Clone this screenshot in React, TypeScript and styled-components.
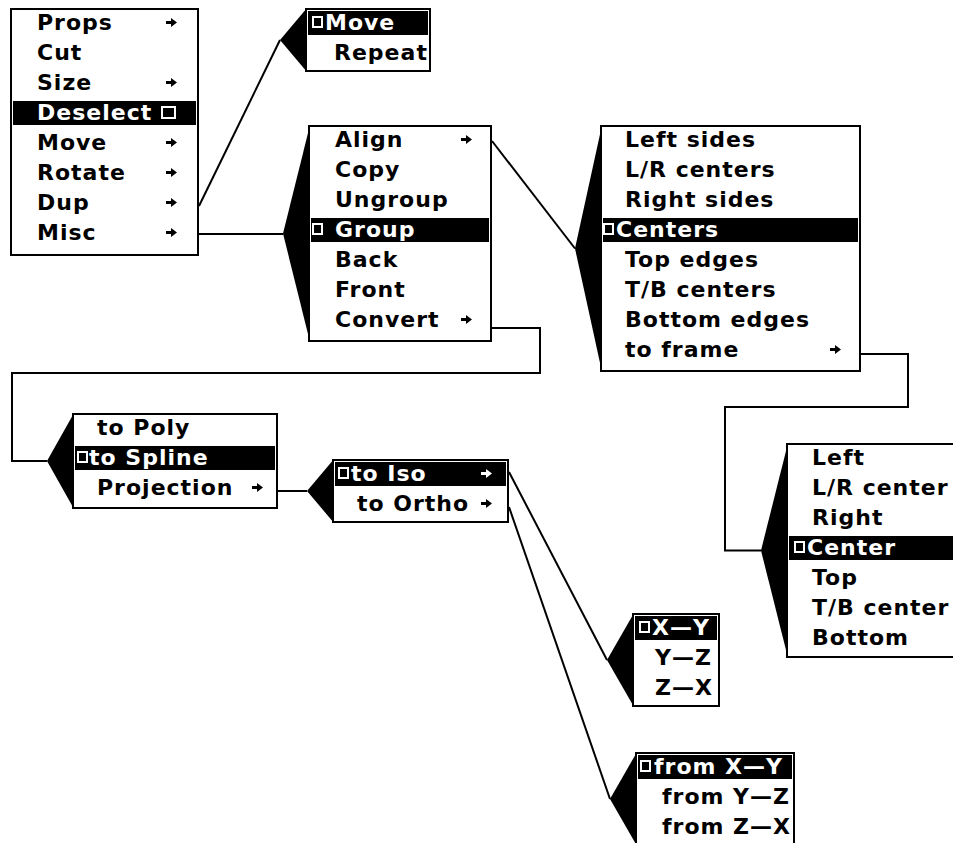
import React from "react";
import styled, { createGlobalStyle } from "styled-components";

const Global = createGlobalStyle`
  html, body { margin: 0; padding: 0; background: #fff; }
  body { overflow: hidden; }
`;

const Canvas = styled.div`
  position: relative;
  width: 953px;
  height: 843px;
  overflow: hidden;
  background: #fff;
  color: #000;
  font-family: "DejaVu Sans", "Liberation Sans", sans-serif;
  font-weight: 700;
  font-size: 22px;
  letter-spacing: 1px;
`;

const Wires = styled.svg`
  position: absolute;
  left: 0;
  top: 0;
  width: 953px;
  height: 843px;
`;

const Box = styled.div<{ $x: number; $y: number; $w: number; $pb: number }>`
  position: absolute;
  left: ${(p) => p.$x}px;
  top: ${(p) => p.$y}px;
  width: ${(p) => p.$w}px;
  box-sizing: border-box;
  display: flex;
  flex-direction: column;
  border: 2px solid #000;
  background: #fff;
  padding: 0 0 ${(p) => p.$pb}px;
`;

const Pointer = styled.svg`
  position: absolute;
  right: 100%;
  top: -2px;
  width: 27px;
  height: calc(100% + 4px);
  overflow: visible;
`;

const Row = styled.div<{ $hl?: boolean; $pl: number; $pr: number }>`
  flex: none;
  display: flex;
  align-items: flex-start;
  height: 24px;
  margin: 1px 1px 5px;
  box-sizing: border-box;
  padding: 2px ${(p) => p.$pr}px 0 ${(p) => p.$pl}px;
  line-height: 20px;
  white-space: nowrap;
  background: ${(p) => (p.$hl ? "#000" : "transparent")};
  color: ${(p) => (p.$hl ? "#fff" : "#000")};
`;

const Label = styled.span<{ $ml?: number }>`
  flex: 1 1 auto;
  margin-left: ${(p) => p.$ml ?? 0}px;
`;

const Check = styled.span<{ $big?: boolean; $after?: boolean }>`
  flex: none;
  box-sizing: border-box;
  width: ${(p) => (p.$big ? 15 : 11)}px;
  height: ${(p) => (p.$big ? 13 : 12)}px;
  margin-top: 3px;
  margin-left: ${(p) => (p.$after ? 9 : 0)}px;
  border: 2px solid currentColor;
`;

const ArrowIcon = styled.svg`
  flex: none;
  width: 11px;
  height: 9px;
  margin-top: 5px;
`;

type Item = { t: string; hl?: boolean; arrow?: boolean; after?: boolean };
type MenuDef = {
  x: number;
  y: number;
  w: number;
  pb: number;
  textPad: number;
  hlPad: number;
  hlText: number;
  pr: number;
  pointer?: boolean;
  items: Item[];
};

const Arrow = () => (
  <ArrowIcon viewBox="0 0 11 9">
    <rect x="0" y="3" width="6" height="3" fill="currentColor" />
    <polygon points="5,0 11,4.5 5,9" fill="currentColor" />
  </ArrowIcon>
);

const Menu = ({ m }: { m: MenuDef }) => (
  <Box $x={m.x} $y={m.y} $w={m.w} $pb={m.pb}>
    {m.pointer && (
      <Pointer viewBox="0 0 27 100" preserveAspectRatio="none">
        <polygon points="27,0 0,50 27,100" fill="#000" />
      </Pointer>
    )}
    {m.items.map((it) => {
      if (it.hl && !it.after) {
        return (
          <Row key={it.t} $hl $pl={m.hlPad - 3} $pr={m.pr}>
            <Check />
            <Label $ml={m.hlText - m.hlPad - 11}>{it.t}</Label>
            {it.arrow && <Arrow />}
          </Row>
        );
      }
      return (
        <Row key={it.t} $hl={it.hl} $pl={m.textPad - 3} $pr={m.pr}>
          {it.after ? (
            <>
              <span>{it.t}</span>
              <Check $big $after />
            </>
          ) : (
            <Label>{it.t}</Label>
          )}
          {it.arrow && <Arrow />}
        </Row>
      );
    })}
  </Box>
);

const menus: MenuDef[] = [
  {
    x: 10, y: 8, w: 189, pb: 4, textPad: 27, hlPad: 4, hlText: 27, pr: 19,
    items: [
      { t: "Props", arrow: true },
      { t: "Cut" },
      { t: "Size", arrow: true },
      { t: "Deselect", hl: true, after: true },
      { t: "Move", arrow: true },
      { t: "Rotate", arrow: true },
      { t: "Dup", arrow: true },
      { t: "Misc", arrow: true },
    ],
  },
  {
    x: 305, y: 8, w: 126, pb: 0, textPad: 29, hlPad: 7, hlText: 20, pr: 4, pointer: true,
    items: [{ t: "Move", hl: true }, { t: "Repeat" }],
  },
  {
    x: 308, y: 125, w: 184, pb: 3, textPad: 27, hlPad: 4, hlText: 27, pr: 17, pointer: true,
    items: [
      { t: "Align", arrow: true },
      { t: "Copy" },
      { t: "Ungroup" },
      { t: "Group", hl: true },
      { t: "Back" },
      { t: "Front" },
      { t: "Convert", arrow: true },
    ],
  },
  {
    x: 600, y: 125, w: 261, pb: 3, textPad: 25, hlPad: 3, hlText: 16, pr: 17, pointer: true,
    items: [
      { t: "Left sides" },
      { t: "L/R centers" },
      { t: "Right sides" },
      { t: "Centers", hl: true },
      { t: "Top edges" },
      { t: "T/B centers" },
      { t: "Bottom edges" },
      { t: "to frame", arrow: true },
    ],
  },
  {
    x: 72, y: 413, w: 206, pb: 2, textPad: 25, hlPad: 5, hlText: 17, pr: 12, pointer: true,
    items: [{ t: "to Poly" }, { t: "to Spline", hl: true }, { t: "Projection", arrow: true }],
  },
  {
    x: 332, y: 459, w: 177, pb: 0, textPad: 25, hlPad: 6, hlText: 19, pr: 14, pointer: true,
    items: [
      { t: "to Iso", hl: true, arrow: true },
      { t: "to Ortho", arrow: true },
    ],
  },
  {
    x: 632, y: 613, w: 88, pb: 0, textPad: 23, hlPad: 7, hlText: 20, pr: 4, pointer: true,
    items: [{ t: "X—Y", hl: true }, { t: "Y—Z" }, { t: "Z—X" }],
  },
  {
    x: 635, y: 752, w: 160, pb: 0, textPad: 27, hlPad: 5, hlText: 19, pr: 4, pointer: true,
    items: [{ t: "from X—Y", hl: true }, { t: "from Y—Z" }, { t: "from Z—X" }],
  },
  {
    x: 786, y: 443, w: 200, pb: 1, textPad: 26, hlPad: 8, hlText: 21, pr: 4, pointer: true,
    items: [
      { t: "Left" },
      { t: "L/R center" },
      { t: "Right" },
      { t: "Center", hl: true },
      { t: "Top" },
      { t: "T/B center" },
      { t: "Bottom" },
    ],
  },
];

const wires: string[] = [
  "199,206 280,40",
  "199,234 283,234",
  "492,141 575,248.5",
  "492,328 540,328 540,373 12,373 12,461 47,461",
  "278,491 307,491",
  "509,472 607,660",
  "509,507 610,799",
  "861,354 908,354 908,407 725,407 725,550.5 761,550.5",
];

export default function App() {
  return (
    <>
      <Global />
      <Canvas>
        <Wires viewBox="0 0 953 843">
          {wires.map((pts) => (
            <polyline key={pts} points={pts} fill="none" stroke="#000" strokeWidth={2} />
          ))}
        </Wires>
        {menus.map((m) => (
          <Menu key={`${m.x}-${m.y}`} m={m} />
        ))}
      </Canvas>
    </>
  );
}
